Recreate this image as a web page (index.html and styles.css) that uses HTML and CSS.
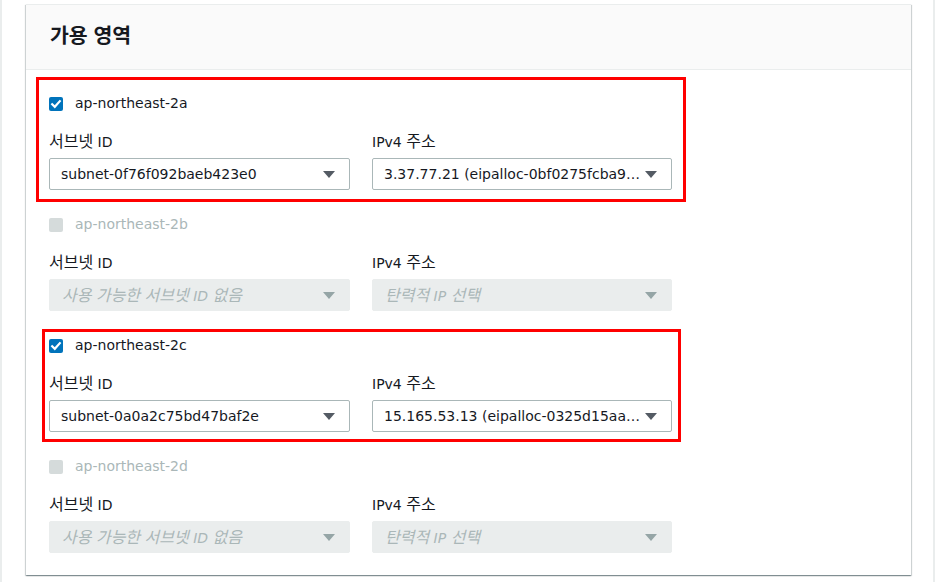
FILE: index.html
```html
<!DOCTYPE html>
<html lang="ko">
<head>
<meta charset="utf-8">
<title>가용 영역</title>
<link rel="stylesheet" href="styles.css">
</head>
<body>
<div class="frame">
  <section class="card">
    <header class="card-header"><h2 class="card-title">가용 영역</h2></header>
    <div class="card-body">

      <div class="zone">
        <div class="mark mark-a"></div>
        <div class="zone-check">
          <span class="cb cb-on"><svg width="14" height="14" viewBox="0 0 14 14"><polyline points="3.2,7.2 5.8,9.8 10.8,4.2" fill="none" stroke="#fff" stroke-width="2.2" stroke-linecap="square"/></svg></span>
          <span class="zone-name">ap-northeast-2a</span>
        </div>
        <div class="fields">
          <div class="field">
            <div class="field-label"><span class="ko">서브넷</span> ID</div>
            <div class="select"><span class="select-text">subnet-0f76f092baeb423e0</span><svg class="caret" width="12" height="7" viewBox="0 0 12 7"><polygon points="0,0 12,0 6,7" fill="#545b64"/></svg></div>
          </div>
          <div class="field">
            <div class="field-label">IPv4 <span class="ko">주소</span></div>
            <div class="select"><span class="select-text">3.37.77.21 (eipalloc-0bf0275fcba9…</span><svg class="caret" width="12" height="7" viewBox="0 0 12 7"><polygon points="0,0 12,0 6,7" fill="#545b64"/></svg></div>
          </div>
        </div>
      </div>

      <div class="zone">
        <div class="zone-check">
          <span class="cb cb-off"></span>
          <span class="zone-name zone-name-off">ap-northeast-2b</span>
        </div>
        <div class="fields">
          <div class="field">
            <div class="field-label"><span class="ko">서브넷</span> ID</div>
            <div class="select select-off"><span class="select-text placeholder"><span class="ko">사용 가능한 서브넷</span> ID <span class="ko">없음</span></span><svg class="caret" width="12" height="7" viewBox="0 0 12 7"><polygon points="0,0 12,0 6,7" fill="#95a5a6"/></svg></div>
          </div>
          <div class="field">
            <div class="field-label">IPv4 <span class="ko">주소</span></div>
            <div class="select select-off"><span class="select-text placeholder"><span class="ko">탄력적</span> IP <span class="ko">선택</span></span><svg class="caret" width="12" height="7" viewBox="0 0 12 7"><polygon points="0,0 12,0 6,7" fill="#95a5a6"/></svg></div>
          </div>
        </div>
      </div>

      <div class="zone">
        <div class="mark mark-c"></div>
        <div class="zone-check">
          <span class="cb cb-on"><svg width="14" height="14" viewBox="0 0 14 14"><polyline points="3.2,7.2 5.8,9.8 10.8,4.2" fill="none" stroke="#fff" stroke-width="2.2" stroke-linecap="square"/></svg></span>
          <span class="zone-name">ap-northeast-2c</span>
        </div>
        <div class="fields">
          <div class="field">
            <div class="field-label"><span class="ko">서브넷</span> ID</div>
            <div class="select"><span class="select-text">subnet-0a0a2c75bd47baf2e</span><svg class="caret" width="12" height="7" viewBox="0 0 12 7"><polygon points="0,0 12,0 6,7" fill="#545b64"/></svg></div>
          </div>
          <div class="field">
            <div class="field-label">IPv4 <span class="ko">주소</span></div>
            <div class="select"><span class="select-text">15.165.53.13 (eipalloc-0325d15aa…</span><svg class="caret" width="12" height="7" viewBox="0 0 12 7"><polygon points="0,0 12,0 6,7" fill="#545b64"/></svg></div>
          </div>
        </div>
      </div>

      <div class="zone">
        <div class="zone-check">
          <span class="cb cb-off"></span>
          <span class="zone-name zone-name-off">ap-northeast-2d</span>
        </div>
        <div class="fields">
          <div class="field">
            <div class="field-label"><span class="ko">서브넷</span> ID</div>
            <div class="select select-off"><span class="select-text placeholder"><span class="ko">사용 가능한 서브넷</span> ID <span class="ko">없음</span></span><svg class="caret" width="12" height="7" viewBox="0 0 12 7"><polygon points="0,0 12,0 6,7" fill="#95a5a6"/></svg></div>
          </div>
          <div class="field">
            <div class="field-label">IPv4 <span class="ko">주소</span></div>
            <div class="select select-off"><span class="select-text placeholder"><span class="ko">탄력적</span> IP <span class="ko">선택</span></span><svg class="caret" width="12" height="7" viewBox="0 0 12 7"><polygon points="0,0 12,0 6,7" fill="#95a5a6"/></svg></div>
          </div>
        </div>
      </div>

    </div>
  </section>
</div>
</body>
</html>
```

FILE: styles.css
```css
* { box-sizing: border-box; }

html, body {
  margin: 0;
  padding: 0;
  background: #ffffff;
}

body {
  font-family: "DejaVu Sans", "Noto Sans CJK KR", sans-serif;
  font-size: 14px;
  color: #16191f;
  width: 937px;
  height: 582px;
  overflow: hidden;
}

.frame {
  width: 935px;
  height: 582px;
  border-left: 2px solid #eaeded;
  border-right: 2px solid #eaeded;
  padding: 4px 0 0 24px;
}

.card {
  width: 885px;
  background: #ffffff;
  border-top: 1px solid #eaeded;
  box-shadow: 0 1px 1px 0 rgba(0, 28, 36, 0.3),
              1px 1px 1px 0 rgba(0, 28, 36, 0.15),
              -1px 1px 1px 0 rgba(0, 28, 36, 0.15);
}

.card-header {
  background: #fafafa;
  border-bottom: 1px solid #eaeded;
  height: 65px;
  padding: 14px 24px 0 24px;
}

.card-title {
  margin: 0;
  font-family: "Noto Sans CJK KR", sans-serif;
  font-size: 20.5px;
  font-weight: 700;
  line-height: 31px;
  color: #16191f;
}

.card-body {
  padding: 22px 23px 22px 23px;
}

.zone {
  position: relative;
  margin-bottom: 23px;
}

.zone:last-child {
  margin-bottom: 0;
}

.mark {
  position: absolute;
  border: 3px solid #ff0000;
  pointer-events: none;
}

.mark-a {
  left: -13px;
  top: -15px;
  width: 650px;
  height: 125px;
}

.mark-c {
  left: -7px;
  top: -5px;
  width: 639px;
  height: 113px;
}

.zone-check {
  display: flex;
  align-items: center;
  height: 22px;
  line-height: 22px;
}

.cb {
  width: 14px;
  height: 14px;
  border-radius: 2px;
  flex: none;
  display: flex;
  margin-top: 1px;
}

.cb-on {
  background: #0073bb;
}

.cb-off {
  background: #d5dbdb;
}

.zone-name {
  margin-left: 12px;
  color: #16191f;
}

.zone-name-off {
  color: #aab7b8;
}

.fields {
  display: grid;
  grid-template-columns: 301px 300px;
  column-gap: 22px;
  margin-top: 16px;
}

.field-label {
  line-height: 20px;
  height: 22px;
  color: #16191f;
}

.ko {
  font-family: "Noto Sans CJK KR", sans-serif;
  font-size: 16px;
}

.select {
  margin-top: 6px;
  height: 32px;
  border: 1px solid #aab7b8;
  border-radius: 2px;
  background: #ffffff;
  display: flex;
  align-items: center;
  padding: 0 14px 0 11px;
}

.select-off {
  background: #eaeded;
  border-color: #eaeded;
  padding-left: 12px;
}

.select-text {
  flex: 1;
  white-space: nowrap;
  overflow: hidden;
  line-height: 22px;
  color: #16191f;
}

.placeholder {
  font-style: italic;
  color: #aab7b8;
}

.caret {
  flex: none;
  margin-left: 4px;
}
```
